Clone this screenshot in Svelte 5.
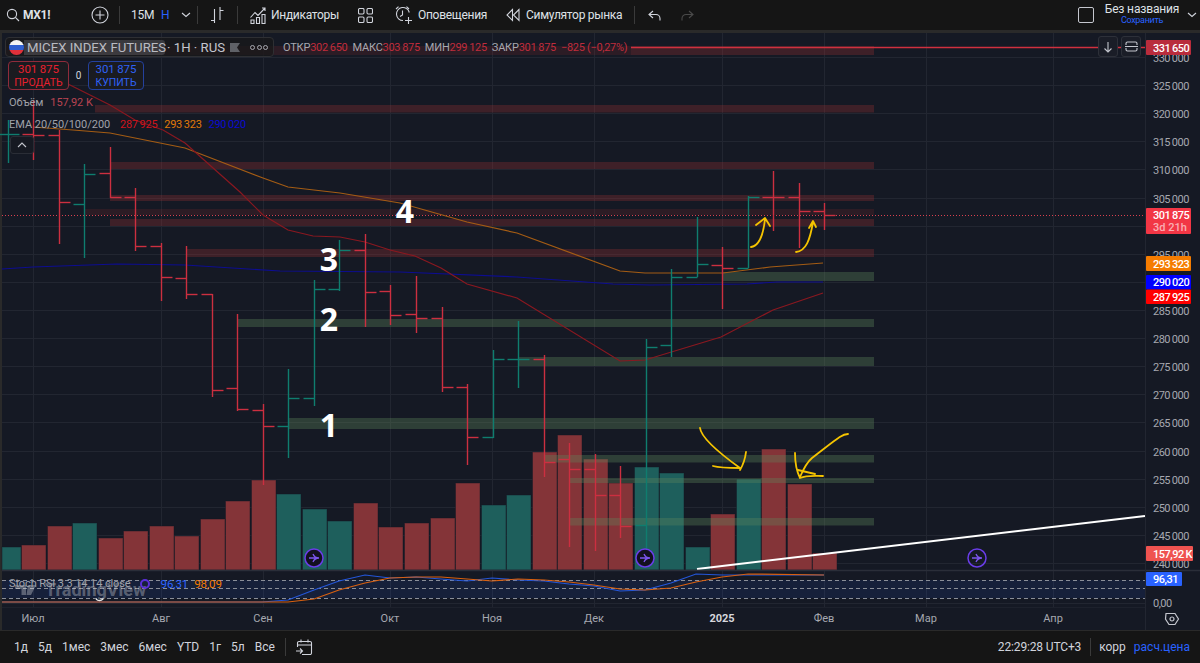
<script>
  // [open, high, low, close, up?] in page pixels
  const raw = [
    [134, 120, 163, 134, 1], [134, 100, 160, 135, 0], [135, 130, 244, 202, 0], [204, 164, 258, 174, 1],
    [173, 147, 198, 197, 0], [197, 188, 251, 246, 0], [246, 243, 301, 277, 0], [278, 246, 299, 294, 0],
    [294, 294, 397, 390, 0], [388, 314, 411, 409, 0], [410, 404, 485, 426, 0], [426, 369, 458, 398, 1],
    [398, 280, 406, 289, 1], [289, 240, 291, 250, 1], [250, 234, 327, 292, 0], [291, 285, 325, 315, 0],
    [314, 276, 333, 318, 0], [318, 307, 392, 387, 0], [387, 384, 465, 437, 0], [437, 350, 438, 359, 1],
    [359, 321, 388, 359, 1], [359, 355, 477, 462, 0], [459, 443, 547, 469, 0], [469, 454, 551, 495, 0],
    [495, 466, 538, 526, 0], [525, 339, 550, 347, 1], [345, 269, 357, 277, 1], [277, 217, 277, 264, 1],
    [265, 247, 309, 268, 0], [268, 196, 268, 197, 1], [197, 171, 231, 197, 0], [197, 183, 248, 211, 0],
    [211, 203, 230, 215, 0]
  ];
  const barX = (i) => Math.round(7.5 + 25.53 * i) + 0.5;
  const bars = raw.map((b, i) => ({ x: barX(i), o: b[0] + 0.5, h: b[1], l: b[2], c: b[3] + 0.5, up: b[4] === 1 }));

  const volTops = [547, 545, 526, 523, 538, 531, 526, 536, 519, 501, 480, 494, 509, 521, 503, 527, 523, 518, 483, 505, 495, 452, 435, 459, 483, 467, 473, 547, 514, 479, 449, 484, 553];
  const volUp = [0, 3, 11, 12, 13, 19, 20, 25, 26, 27, 29];
  const volumes = volTops.map((top, i) => {
    const left = Math.max(2, barX(i) - 12);
    return { x: left, w: barX(i) + 12.5 - left, top, up: volUp.includes(i) };
  });

  const zones = [
    [5, 46, 9, 'd', 631], [631, 46, 9, 'r'], [95, 105, 7.5, 'r'], [110, 162, 7, 'r'], [110, 195, 6, 'r'], [84, 209, 6, 'd'], [110, 219, 7, 'r'], [186, 249, 8, 'r'],
    [722, 272, 9, 'g'], [237, 319, 8, 'g'], [518, 357, 9, 'g'], [288, 418, 11, 'g'], [544, 455, 7.5, 'g'], [569, 478, 5, 'g'], [569, 518, 7.5, 'g']
  ];

  const prices = [330, 325, 320, 315, 310, 305, 300, 295, 290, 285, 280, 275, 270, 265, 260, 255, 250, 245, 240];
  const priceY = (p) => Math.round(57 + (330 - p) * 5.622) + 0.5;
  const hidden = [300, 290];

  const months = [[33, 'Июл'], [161, 'Авг'], [263, 'Сен'], [390, 'Окт'], [492, 'Ноя'], [594, 'Дек'], [722, '2025'], [824, 'Фев'], [926, 'Мар'], [1053, 'Апр']];

  const ema20 = '50,75 66,83 110,105 135,120 163,130 185,143 240,192 263,215 288,230 313,236 340,237 365,242 390,250 415,256 441,268 467,284 517,298 620,361 645,360 721,337 773,310 823,293';
  const ema50 = '33,127 73,130 110,133 185,148 263,178 288,187 340,193 400,203 467,222 517,233 620,271 645,273 723,273 770,267 823,263';
  const ema100 = '2,269 33,267 117,264 185,265 280,271 400,272 517,277 613,284 650,285 747,284 777,282 823,282';
  const rsiBlue = '2,602 262,602 288,600 314,590 339,581 365,575 390,578 416,577 441,579 467,581 492,578 518,580 544,581 569,584 594,586 620,591 645,590 671,583 696,574 722,575 824,575';
  const rsiOrange = '2,602 288,602 314,599 339,590 365,583 390,578 416,577 441,577 467,579 492,581 518,579 544,580 569,582 594,585 620,589 645,590 671,588 696,582 722,577 748,574 824,575';

  const tags = [
    { y: 40, h: 15, w: 45, fill: '#b92c3c', text: '331\u2009650' },
    { y: 256, h: 15, w: 45, fill: '#f57c00', text: '293\u2009323' },
    { y: 275, h: 14.5, w: 45, fill: '#0000ff', text: '290\u2009020' },
    { y: 289.5, h: 14.5, w: 45, fill: '#ff0000', text: '287\u2009925' },
    { y: 546, h: 15, w: 47, fill: '#ef5350', text: '157,92\u2009K' },
    { y: 572, h: 14, w: 36, fill: '#2962ff', text: '96,31' }
  ];

  const ranges = ['1д', '5д', '1мес', '3мес', '6мес', 'YTD', '1г', '5л', 'Все'];
  const eventMarks = [314, 645, 977];
</script>

<div class="page">
  <header class="topbar">
    <div class="search">
      <svg width="14" height="14" viewBox="0 0 14 14"><circle cx="6" cy="6" r="4.6" /><path d="M9.4 9.4 13 13" /></svg>
      <b>MX1!</b>
    </div>
    <svg class="plus" width="18" height="18" viewBox="0 0 18 18"><circle cx="9" cy="9" r="8" /><path d="M9 4.5v9M4.5 9h9" /></svg>
    <i class="sep s1"></i>
    <span class="tf">15М</span>
    <span class="tf-h">Н</span>
    <svg class="chev" width="10" height="6" viewBox="0 0 10 6"><path d="M1 1l4 3.5L9 1" /></svg>
    <i class="sep s2"></i>
    <svg class="barsicon" width="14" height="18" viewBox="0 0 14 18"><path d="M4.5 3v14M1 14.5h3.5M10 1v13M10 4.5h3.5" /></svg>
    <i class="sep s3"></i>
    <svg class="ind" width="16" height="17" viewBox="0 0 16 17"><path d="M.5 10.5 5 5.5l3 3L15 1M12 1h3v3M1 13h3v3.5H1zM6.5 10.5h3v6h-3zM12 7.5h3v9h-3z" /></svg>
    <span class="label ind-l">Индикаторы</span>
    <svg class="tpl" width="15" height="15" viewBox="0 0 15 15"><rect x=".5" y=".5" width="5.5" height="5.5" rx="1.2" /><rect x="9" y=".5" width="5.5" height="5.5" rx="1.2" /><rect x=".5" y="9" width="5.5" height="5.5" rx="1.2" /><rect x="9" y="9" width="5.5" height="5.5" rx="1.2" /></svg>
    <svg class="alert" width="19" height="19" viewBox="0 0 19 19"><path d="M9 14.5A6.5 6.5 0 1 1 15.3 6.5M8.5 4.5v4.5l-2.500 1.500M2 3 4.500.7M12.500.7 15 3M14.500 11v7M11 14.500h7" /></svg>
    <span class="label al-l">Оповещения</span>
    <svg class="replay" width="14" height="14" viewBox="0 0 14 14"><path d="M6.500 1.500 1 7l5.500 5.500zM13 1.500 7.500 7l5.500 5.500z" /></svg>
    <span class="label re-l">Симулятор рынка</span>
    <i class="sep s4"></i>
    <svg class="undo" width="13" height="11" viewBox="0 0 13 11"><path d="M5 1 1 4.500 5 8M1 4.500h7a4 4 0 0 1 4 4V10.500" /></svg>
    <svg class="redo" width="13" height="11" viewBox="0 0 13 11"><path d="M8 1l4 3.500L8 8M12 4.500H5a4 4 0 0 0-4 4V10.500" /></svg>
    <div class="right">
      <span class="square"></span>
      <div class="layout"><span>Без названия</span><em>Сохранить</em></div>
      <svg class="chev" width="10" height="6" viewBox="0 0 10 6"><path d="M1 1l4 3.500L9 1" /></svg>
    </div>
  </header>

  <main class="chart">
    <svg class="plot" width="1200" height="597" viewBox="0 33 1200 597">
      <rect x="2" y="33" width="1198" height="597" fill="#151924" />
      {#each prices as p}
        <line x1="2" x2="1145" y1={priceY(p)} y2={priceY(p)} class="grid" />
      {/each}
      {#each months as m}
        <line x1={m[0] + 0.5} x2={m[0] + 0.5} y1="33" y2="607" class="grid" />
      {/each}

      {#each volumes as v}
        <rect x={v.x} y={v.top} width={v.w} height={570 - v.top} fill={v.up ? '#1e5f5c' : '#843438'} stroke="#151924" stroke-opacity="0.45" />
      {/each}

      {#each zones as z}
        <rect x={z[0]} y={z[1]} width={(z[4] ?? 874) - z[0]} height={z[2]} class={'zone ' + z[3]} />
      {/each}

      <line x1="631" x2="1146" y1="47.500" y2="47.500" stroke="#d0303f" stroke-width="1.500" />
      <line x1="2" x2="1146" y1="215.500" y2="215.500" stroke="#d8404f" stroke-dasharray="1 2" />

      <polyline points={ema100} class="ln" stroke="#0d0d90" />
      <polyline points={ema50} class="ln" stroke="#a45c14" />
      <polyline points={ema20} class="ln" stroke="#8a1820" />

      {#each bars as b}
        <g stroke={b.up ? '#0f7d6f' : '#cc2f40'} stroke-width="1.400">
          <line x1={b.x} x2={b.x} y1={b.h} y2={b.l} />
          <line x1={b.x - 11} x2={b.x} y1={b.o} y2={b.o} />
          <line x1={b.x} x2={b.x + 11} y1={b.c} y2={b.c} />
        </g>
      {/each}

      <!-- hand drawn -->
      <line x1="697" y1="569" x2="1145" y2="516" stroke="#fff" stroke-width="2" />
      <g class="pen">
        <path d="M751 247C758 246 763 238 765 219M756 225 765 218 770 226" />
        <path d="M796 252C806 251 810 240 813 222M809 228 813 221 816 227" />
        <path d="M700 428C701 436 715 450 740 468M746 452C745 460 743 465 740 470M713 466C720 468 732 468 740 468" />
        <path d="M848 434C842 434 838 438 812 458 806 463 803 470 800 477M795 453C795 462 797 472 800 478 807 475 815 476 823 476M798 470 815 474" />
      </g>

      <g class="num">
        <text x="329" y="437">1</text>
        <text x="329" y="331">2</text>
        <text x="329" y="271">3</text>
        <text x="405" y="223">4</text>
      </g>

      {#each eventMarks as x, i}
        <g transform={`translate(${x} 558)`}>
          <circle r="9" fill={i < 2 ? '#13101f' : 'none'} stroke="#6a3de8" stroke-width="1.500" />
          <path d="M-5 0H5M-1 -4C0 -1.500 2 0 5 0 2 0 0 1.500-1 4" fill="none" stroke="#7c55ee" stroke-width="1.300" />
        </g>
      {/each}

      <!-- stoch pane -->
      <line x1="2" x2="1200" y1="570.500" y2="570.500" stroke="#2a2e39" stroke-width="1.500" />
      <rect x="2" y="580" width="1143" height="18" fill="#2962ff" fill-opacity="0.1" />
      <g class="dash">
        <line x1="2" x2="1145" y1="580.500" y2="580.500" />
        <line x1="2" x2="1145" y1="588.500" y2="588.500" />
        <line x1="2" x2="1145" y1="598.500" y2="598.500" />
      </g>
      <line x1="2" x2="1145" y1="603.500" y2="603.500" class="grid" />
      <polyline points={rsiBlue} class="ln" stroke="#2456d8" />
      <polyline points={rsiOrange} class="ln" stroke="#d9600f" />

      <!-- watermark -->
      <path d="M15 585h11v10h-4.500v-6H15zM28 585h8l-5 10h-4.500z" fill="#fff" fill-opacity="0.3" />
      <text x="45" y="596" class="mark">TradingView</text>
      <path d="M96 599c2 2 5 2 7 0" fill="none" stroke="#e8e8e8" stroke-width="1.400" />

      <!-- price axis -->
      <line x1="1145.500" x2="1145.500" y1="33" y2="630" stroke="#222631" />
      {#each prices as p}
        {#if !hidden.includes(p)}
          <text x="1153" y={priceY(p) + 4} class="axis">{p}&thinsp;000</text>
        {/if}
      {/each}
      <text x="1153" y="607" class="axis">0,00</text>
      <rect x="1146" y="208" width="45" height="26" rx="1" fill="#f23645" />
      <text x="1153" y="219" class="tag">301&thinsp;875</text>
      <text x="1153" y="231" class="tag dim">3d 21h</text>
      {#each tags as t}
        <rect x="1146" y={t.y} width={t.w} height={t.h} rx="1" fill={t.fill} />
        <text x="1153" y={t.y + t.h / 2 + 4} class="tag">{t.text}</text>
      {/each}

      <!-- time axis -->
      <line x1="2" x2="1145" y1="607.500" y2="607.500" stroke="#1d212c" />
      {#each months as m}
        <text x={m[0]} y="622" class="time" class:year={m[1] === '2025'}>{m[1]}</text>
      {/each}
      <g transform="translate(1172 619)" fill="none" stroke="#c4c6ce" stroke-width="1.200">
        <path d="M-6-5.500H3L6.500 0 3 5.500H-3L-6.500 0z" />
        <circle r="2" />
      </g>
    </svg>

    <div class="legend">
      <div class="title-row">
        <div class="ticker">
          <span class="flag"></span>
          <span class="name">MICEX INDEX FUTURES</span>
          <span class="meta">· 1H · RUS</span>
          <svg width="10" height="9" viewBox="0 0 10 9"><path d="M0 0h10L7 4.500 10 9H0z" fill="#5f6167" /></svg>
          <span class="dots"><i></i><i></i><i></i></span>
        </div>
        <div class="ohlc">
          <span>ОТКР<b>302&thinsp;650</b></span>
          <span>МАКС<b>303&thinsp;875</b></span>
          <span>МИН<b>299&thinsp;125</b></span>
          <span>ЗАКР<b>301&thinsp;875</b></span>
          <b>−825 (−0,27%)</b>
        </div>
      </div>
      <div class="trade">
        <div class="order sell"><b>301&thinsp;875</b><span>ПРОДАТЬ</span></div>
        <span class="spread">0</span>
        <div class="order buy"><b>301&thinsp;875</b><span>КУПИТЬ</span></div>
      </div>
      <div class="study vol">Объём <b>157,92 K</b></div>
      <div class="study ema">EMA 20/50/100/200 <b class="c1">287&thinsp;925</b><b class="c2">293&thinsp;323</b><b class="c3">290&thinsp;020</b></div>
      <button class="collapse" aria-label="Свернуть">
        <svg width="10" height="6" viewBox="0 0 10 6"><path d="M1 5l4-4 4 4" /></svg>
      </button>
    </div>

    <div class="stoch">
      <span>Stoch RSI 3 3 14 14 close</span>
      <i class="spin"></i>
      <b class="c-b">96,31</b>
      <b class="c-o">98,09</b>
    </div>

    <div class="scale-btns">
      <button aria-label="Вниз"><svg width="10" height="12" viewBox="0 0 10 12"><path d="M5 1v9.500M1.500 7.500 5 11l3.500-3.500" /></svg></button>
      <button aria-label="Развернуть"><svg width="13" height="11" viewBox="0 0 13 11"><path d="M1 4V2.500A1.500 1.500 0 0 1 2.500 1h8A1.500 1.500 0 0 1 12 2.500V4M1 7v1.500A1.500 1.500 0 0 0 2.500 10h8A1.500 1.500 0 0 0 12 8.500V7M0 5.500h13" /></svg></button>
    </div>
  </main>

  <footer class="bottombar">
    <nav class="ranges">
      {#each ranges as r}<span>{r}</span>{/each}
    </nav>
    <i class="sep s5"></i>
    <svg class="cal" width="17" height="17" viewBox="0 0 17 17"><path d="M1.500 8V4A1.500 1.500 0 0 1 3 2.500h11A1.500 1.500 0 0 1 15.500 4v10a1.500 1.500 0 0 1-1.500 1.500H6M1.500 6h14M5 .5v3M12 .5v3M0 12h6M4 9.500 6.500 12 4 14.500" /></svg>
    <div class="status">
      <span class="clock">22:29:28 UTC+3</span>
      <i class="sep"></i>
      <span>корр</span>
      <span class="blue">расч.цена</span>
    </div>
  </footer>
</div>

<style>
  :global(body) {
    margin: 0;
    background: #2a2a2a;
  }
  .page {
    width: 1200px;
    height: 663px;
    display: flex;
    flex-direction: column;
    background: #2a2a2a;
    font-family: Roboto, "Noto Sans", sans-serif;
    overflow: hidden;
  }
  .topbar {
    height: 30px;
    flex: none;
    background: #151515;
    display: flex;
    align-items: center;
    color: #dfe1e6;
    font-size: 12px;
    letter-spacing: -0.3px;
  }
  .topbar svg,
  .bottombar svg {
    fill: none;
    stroke: #d1d4dc;
    stroke-width: 1.100;
    flex: none;
  }
  .search {
    display: flex;
    align-items: center;
    gap: 3px;
    margin-left: 6px;
    width: 85px;
  }
  .search b {
    font-weight: 700;
    font-size: 12px;
  }
  .sep {
    display: block;
    width: 1px;
    height: 18px;
    background: #3a3a3a;
    flex: none;
  }
  .s1 { margin-left: 10px; }
  .tf { margin-left: 11px; width: 20px; white-space: nowrap; }
  .tf-h { margin-left: 10px; width: 9px; color: #2962ff; }
  .topbar > .chev { margin-left: 11px; }
  .s2 { margin-left: 6px; }
  .barsicon { margin-left: 12px; }
  .s3 { margin-left: 13px; }
  .ind { margin-left: 12px; }
  .label { white-space: nowrap; }
  .ind-l { margin-left: 5px; }
  .tpl { margin-left: 19px; }
  .alert { margin-left: 21px; }
  .al-l { margin-left: 5px; }
  .replay { margin-left: 19px; }
  .re-l { margin-left: 6px; }
  .s4 { margin-left: 12px; }
  .undo { margin-left: 13px; }
  .topbar .redo { margin-left: 20px; stroke: #4a4a4a; }
  .right {
    margin-left: auto;
    display: flex;
    align-items: center;
    padding-right: 3px;
  }
  .square {
    width: 14px;
    height: 14px;
    border: 1px solid #c4c6ce;
    border-radius: 2px;
  }
  .layout {
    margin-left: 11px;
    width: 74px;
    display: flex;
    flex-direction: column;
    align-items: center;
    line-height: 11px;
    font-size: 12px;
    letter-spacing: -0.15px;
    white-space: nowrap;
  }
  .layout em {
    font-style: normal;
    font-size: 9px;
    letter-spacing: -0.3px;
    color: #2962ff;
  }
  .right .chev { margin-left: 8px; }

  .chart {
    margin-top: 3px;
    height: 597px;
    flex: none;
    position: relative;
  }
  .plot { display: block; }
  .grid { stroke: #222631; }
  .zone.r { fill: rgba(160, 50, 50, 0.3); }
  .zone.d { fill: rgba(160, 50, 50, 0.17); }
  .zone.g { fill: rgba(95, 136, 93, 0.35); }
  .ln { fill: none; stroke-width: 1.200; }
  .pen { fill: none; stroke: #f5c400; stroke-width: 1.800; stroke-linecap: round; stroke-linejoin: round; }
  .num text { fill: #fff; font: 700 32px "Open Sans", sans-serif; text-anchor: middle; }
  .dash line { stroke: #8a8e98; stroke-dasharray: 4 3; }
  .mark { fill: #fff; fill-opacity: 0.3; font: 700 18px Roboto, sans-serif; }
  .axis { fill: #a6a8b0; font-size: 11px; letter-spacing: -0.5px; }
  .tag { fill: #fff; font-size: 11px; font-weight: 500; letter-spacing: -0.5px; }
  .tag.dim { fill-opacity: 0.6; letter-spacing: 0; }
  .time { fill: #a6a8b0; font-size: 11px; text-anchor: middle; }
  .time.year { fill: #d6d8de; font-weight: 700; }

  .legend {
    position: absolute;
    left: 5px;
    top: 4px;
    width: 700px;
    display: flex;
    flex-direction: column;
    align-items: flex-start;
    color: #b2b5be;
    font-size: 11px;
  }
  .title-row { display: flex; align-items: center; }
  .ticker {
    width: 269px;
    height: 20px;
    box-sizing: border-box;
    display: flex;
    align-items: center;
    background: rgba(24, 24, 26, 0.75);
    border: 1px solid #2e2f33;
    border-radius: 4px;
    color: #c4c6ce;
    font-size: 13.200px;
    white-space: nowrap;
  }
  .flag {
    width: 15px;
    height: 15px;
    border-radius: 50%;
    margin-left: 3px;
    flex: none;
    background: linear-gradient(#f4f4f4 0 33%, #2f5fd0 33% 66%, #e0303a 66%);
  }
  .name {
    padding-left: 3px;
    width: 141px;
    box-sizing: border-box;
    background: rgba(120, 120, 125, 0.35);
    border-radius: 0 3px 3px 0;
    margin-right: 2px;
    color: #b9bbc2;
  }
  .meta { width: 63px; }
  .dots { display: flex; gap: 1.500px; margin-left: 10px; }
  .dots i {
    width: 3px;
    height: 3px;
    border: 0.750px solid #a6a8b0;
    border-radius: 50%;
  }
  .ohlc {
    display: flex;
    gap: 5px;
    margin-left: 9px;
    white-space: nowrap;
    color: #a6a8b0;
    letter-spacing: -0.2px;
  }
  .ohlc b { font-weight: 400; color: #c02c3c; letter-spacing: -0.3px; }
  .trade { display: flex; align-items: center; margin: 4px 0 0 3px; }
  .order {
    height: 29px;
    box-sizing: border-box;
    border: 1px solid;
    border-radius: 4px;
    background: #1a1b20;
    display: flex;
    flex-direction: column;
    align-items: center;
    justify-content: center;
    line-height: 13px;
    font-size: 10.500px;
  }
  .order b { font-weight: 400; font-size: 11.500px; }
  .sell { width: 61px; border-color: #8f2c3b; color: #e8202e; }
  .buy { width: 56px; border-color: #24419e; color: #2f62f5; }
  .spread { width: 19px; text-align: center; color: #d1d4dc; font-size: 10px; }
  .study { margin-left: 4px; white-space: nowrap; line-height: 14px; font-size: 11px; color: #a0a2aa; }
  .study b { font-weight: 400; }
  .vol { margin-top: 6px; }
  .vol b { margin-left: 4px; color: #b84452; }
  .ema { margin-top: 8px; }
  .ema b { margin-left: 7px; letter-spacing: -0.3px; }
  .c1 { color: #d0141c; }
  .c2 { color: #e07a08; }
  .c3 { color: #0a0ad0; }
  .collapse {
    margin: 4px 0 0 5px;
    width: 24px;
    height: 18px;
    padding: 0;
    display: flex;
    align-items: center;
    justify-content: center;
    background: #161922;
    border: 1px solid #2a2d36;
    border-radius: 3px;
  }
  .collapse svg, .scale-btns svg { fill: none; stroke: #c4c6ce; stroke-width: 1.100; }
  .stoch {
    position: absolute;
    left: 9px;
    top: 544px;
    display: flex;
    align-items: center;
    gap: 6px;
    font-size: 11px;
    line-height: 14px;
    letter-spacing: -0.1px;
    color: #a0a2aa;
    white-space: nowrap;
  }
  .stoch b { font-weight: 400; font-size: 11.500px; }
  .spin {
    width: 6px;
    height: 6px;
    border: 2px solid #5a2fd8;
    border-radius: 50%;
    margin: 0 5px 0 3px;
  }
  .c-b { color: #2962ff; }
  .c-o { color: #f57c00; }
  .scale-btns {
    position: absolute;
    left: 1098px;
    top: 3px;
    display: flex;
    gap: 3px;
  }
  .scale-btns button {
    width: 20px;
    height: 21px;
    padding: 0;
    display: flex;
    align-items: center;
    justify-content: center;
    background: #1a1d27;
    border: 1px solid #2d3039;
    border-radius: 3px;
  }

  .bottombar {
    height: 33px;
    flex: none;
    background: #151515;
    border-top: 1px solid #2a2a2a;
    box-sizing: border-box;
    display: flex;
    align-items: center;
    color: #d1d4dc;
    font-size: 12px;
  }
  .ranges { display: flex; margin-left: 14px; gap: 10px; }
  .s5 { margin-left: 10px; }
  .cal { margin-left: 10px; }
  .status {
    margin-left: auto;
    padding-right: 10px;
    display: flex;
    align-items: center;
    gap: 8px;
    white-space: nowrap;
  }
  .clock { letter-spacing: -0.15px; }
  .status .sep { margin-left: 1px; }
  .blue { color: #2962ff; }
</style>
